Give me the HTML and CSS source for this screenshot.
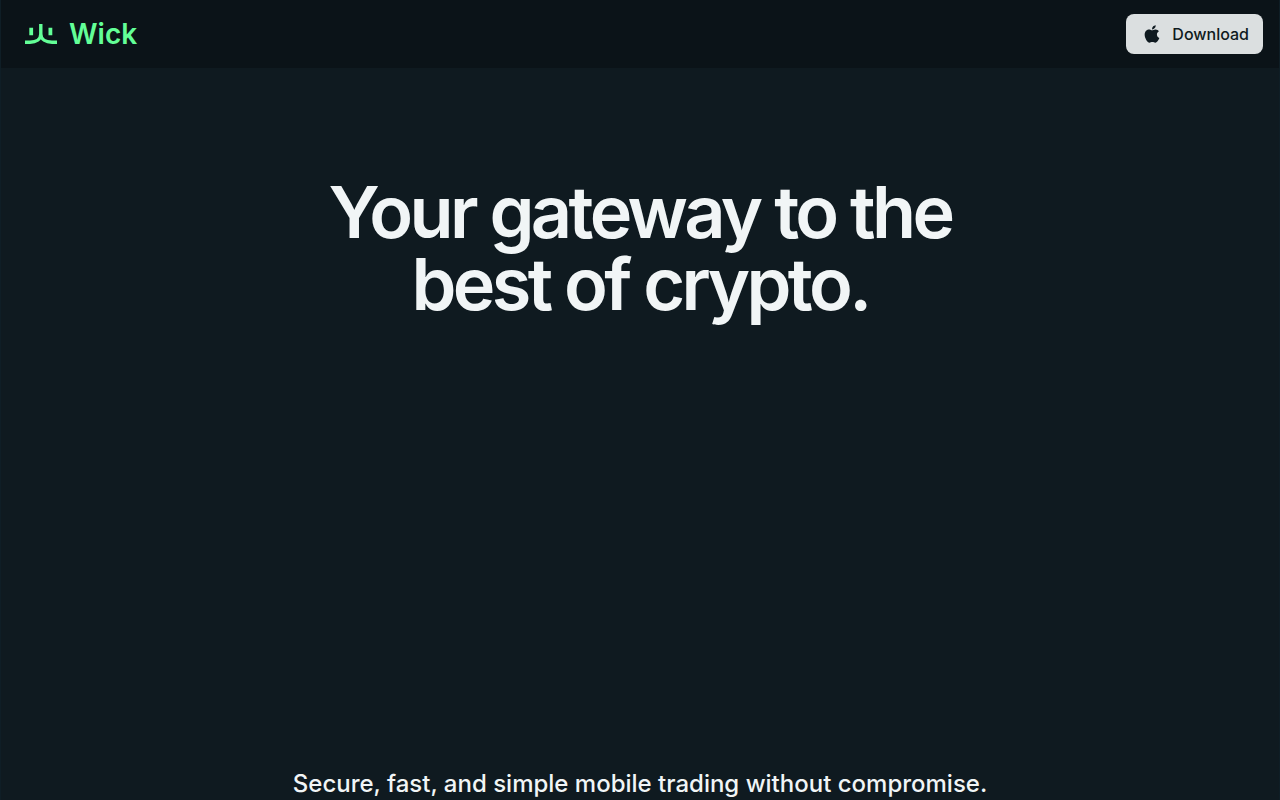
FILE: index.html
```html
<!DOCTYPE html>
<html lang="en">
<head>
<meta charset="utf-8">
<meta name="viewport" content="width=device-width, initial-scale=1">
<title>Wick</title>
<link rel="stylesheet" href="styles.css">
</head>
<body>
<div class="page">
  <header class="header">
    <a class="brand" href="#">
      <svg class="brand-mark" viewBox="0 0 32 20" width="32" height="20" fill="none" stroke="currentColor" aria-hidden="true">
        <path stroke-width="3.4" d="M0 18.2H5C11 18.2 15.8 15.5 15.8 10V0M15.8 10C15.8 15.5 21 18.2 27 18.2H32"/>
        <path stroke-width="3.8" d="M6.2 3.8V11.2M25.4 3.8V11.2"/>
      </svg>
      <span class="brand-name">Wick</span>
    </a>
    <a class="download" href="#">
      <svg class="apple" viewBox="0 0 384 512" width="16" height="20" fill="currentColor" aria-hidden="true">
        <path d="M318.7 268.7c-.2-36.7 16.4-64.4 50-84.8-18.8-26.9-47.2-41.7-84.7-44.6-35.5-2.8-74.3 20.7-88.5 20.7-15 0-49.4-19.7-76.4-19.7C63.3 141.2 4 184.8 4 273.5q0 39.3 14.4 81.2c12.8 36.7 59 126.7 107.2 125.2 25.2-.6 43-17.9 75.8-17.9 31.8 0 48.3 17.9 76.4 17.9 48.6-.7 90.4-82.5 102.6-119.3-65.2-30.7-61.7-90-61.7-91.9zm-56.6-164.2c27.3-32.4 24.8-61.9 24-72.5-24.1 1.4-52 16.4-67.9 34.9-17.5 19.8-27.8 44.3-25.6 71.9 26.1 2 49.9-11.4 69.5-34.3z"/>
      </svg>
      <span>Download</span>
    </a>
  </header>
  <main class="hero">
    <h1 class="title">Your gateway to the best of crypto.</h1>
    <p class="tagline">Secure, fast, and simple mobile trading without compromise.</p>
  </main>
</div>
</body>
</html>
```
FILE: styles.css
```css
* { box-sizing: border-box; }
body {
  margin: 0;
  background: #0f1a20;
  color: #f1f5f6;
  font-family: Inter, "Liberation Sans", sans-serif;
}
.page {
  min-height: 100vh;
  border: 1px solid #0f1e26;
  border-width: 0 1px;
}
.header {
  display: flex;
  align-items: center;
  justify-content: space-between;
  height: 68px;
  padding: 0 16px 0 24px;
  background: #0b1318;
}
.brand {
  display: flex;
  align-items: center;
  gap: 12px;
  color: #63ff97;
  text-decoration: none;
}
.brand-name {
  font-size: 28px;
  line-height: 32px;
  font-weight: 600;
}
.download {
  display: flex;
  align-items: center;
  gap: 12px;
  height: 40px;
  padding: 0 14px 0 18px;
  border-radius: 8px;
  background: #dbdfe0;
  color: #0f1a20;
  font-size: 16px;
  font-weight: 500;
  text-decoration: none;
}
.hero {
  padding-top: 108px;
  text-align: center;
}
.title {
  max-width: 720px;
  margin: 0 auto;
  font-size: 72px;
  line-height: 72px;
  font-weight: 600;
  letter-spacing: -0.05em;
}
.tagline {
  margin: 448px 0 0;
  font-size: 24px;
  line-height: 32px;
  font-weight: 500;
}
```
